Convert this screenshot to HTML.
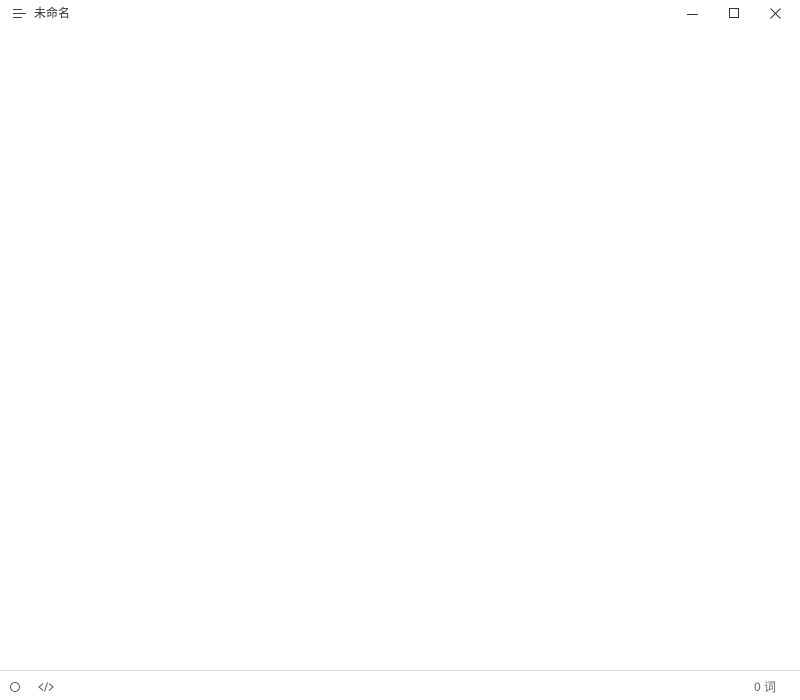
<!DOCTYPE html>
<html><head><style>
body{margin:0;width:800px;height:700px;background:#fff;position:relative;overflow:hidden;font-family:"Liberation Sans","Noto Sans CJK SC",sans-serif;color:#333}
.t{position:absolute;font-size:12px;line-height:14px}
</style></head><body>
<svg style="position:absolute;left:12px;top:7px" width="16" height="12"><g stroke="#444" stroke-width="1"><line x1="1" y1="2.5" x2="10" y2="2.5"/><line x1="1" y1="6.5" x2="14" y2="6.5"/><line x1="1" y1="10.5" x2="10" y2="10.5"/></g></svg>
<div class="t" style="left:34px;top:6px">未命名</div>
<svg style="position:absolute;left:680px;top:0" width="120" height="28"><g stroke="#333" stroke-width="1" fill="none"><line x1="7" y1="14.5" x2="18" y2="14.5"/><rect x="49.5" y="8.5" width="9" height="9"/><path d="M90.5 8.5l10 10M100.5 8.5l-10 10"/></g></svg>
<div style="position:absolute;left:0;top:670px;width:800px;height:1px;background:#ddd"></div>
<svg style="position:absolute;left:8px;top:680px" width="50" height="14"><g stroke="#555" stroke-width="1" fill="none"><circle cx="7" cy="7" r="4.5"/><path d="M35 3.5l-4 3.5 4 3.5M41 3.5l4 3.5-4 3.5M39.5 2.5l-3 9"/></g></svg>
<div class="t" style="left:754px;top:680px;color:#666">0 词</div>
</body></html>
